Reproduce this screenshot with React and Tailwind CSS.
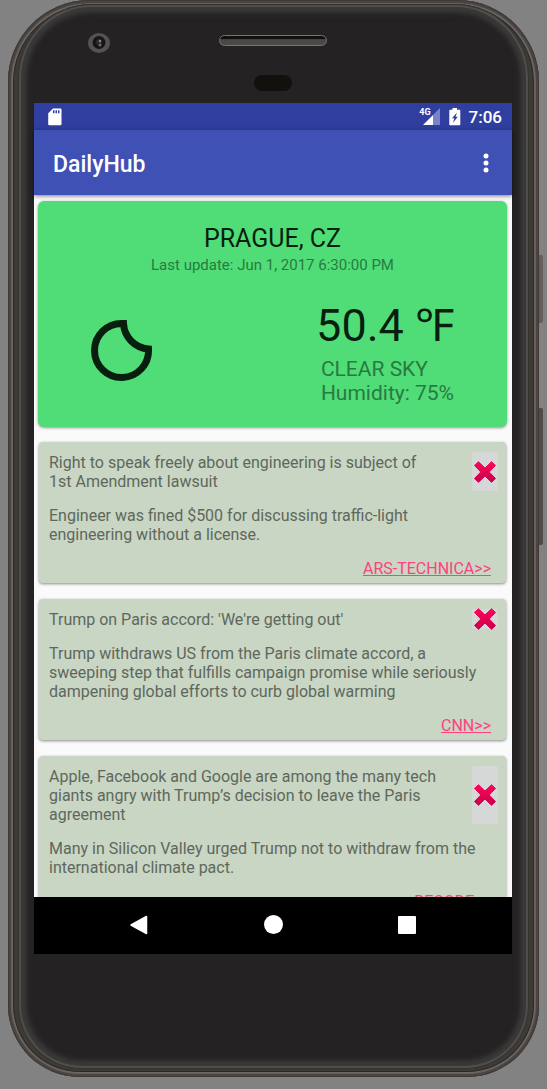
import React from "react";

const articles = [
  {
    title: "Right to speak freely about engineering is subject of 1st Amendment lawsuit",
    body: "Engineer was fined $500 for discussing traffic-light engineering without a license.",
    source: "ARS-TECHNICA>>",
  },
  {
    title: "Trump on Paris accord: 'We're getting out'",
    body: "Trump withdraws US from the Paris climate accord, a sweeping step that fulfills campaign promise while seriously dampening global efforts to curb global warming",
    source: "CNN>>",
  },
  {
    title: "Apple, Facebook and Google are among the many tech giants angry with Trump’s decision to leave the Paris agreement",
    body: "Many in Silicon Valley urged Trump not to withdraw from the international climate pact.",
    source: "RECODE>>",
  },
];

function StatusBar() {
  return (
    <div className="flex h-[27px] shrink-0 items-center bg-[#303f9f] pr-[10px] pl-[14px] text-white">
      <svg viewBox="0 0 14 18" className="h-[18px] w-[14px]" aria-hidden="true">
        <path
          fill="#fff"
          fillRule="evenodd"
          d="M5 .5h7.2c.8 0 1.3.5 1.3 1.300V16c0 .8-.5 1.300-1.300 1.300H1.500C.7 17.300.2 16.800.2 16V5.300zM5 2.300v3h1.500v-3zM7.500 2.300v3H9v-3zM10 2.300v3h1.500v-3z"
        />
      </svg>
      <div className="mr-[9px] ml-auto flex items-start">
        <span className="-mr-[8px] text-[9px] leading-[9px] font-bold">4G</span>
        <svg viewBox="0 0 17 17" className="h-[17px] w-[17px]" aria-hidden="true">
          <path fill="#7983c5" d="M10 7 17 0v17h-7z" />
          <path fill="#fff" d="M0 17 10 7v10z" />
        </svg>
      </div>
      <svg viewBox="0 0 12 18" className="mr-[8px] h-[18px] w-[12px]" aria-hidden="true">
        <path
          fill="#fff"
          fillRule="evenodd"
          d="M3.500 0h4.500v1.700h2.300c.6 0 1 .4 1 1v13.600c0 .6-.4 1-1 1H1.300c-.6 0-1-.4-1-1V2.700c0-.6.4-1 1-1h2.200zM8 4.500 3 10.200h2.300L4 14.800l4.800-6H6.500z"
        />
      </svg>
      <span className="pt-px text-[17px] leading-[26px] font-medium">7:06</span>
    </div>
  );
}

function AppBar() {
  return (
    <header className="relative z-10 flex h-[65px] shrink-0 items-center justify-between bg-[#3f51b5] pr-[14px] pl-[19px] text-white shadow-[0_1px_4px_rgba(0,0,0,0.5)]">
      <h1 className="pt-[4px] text-[23px] leading-[28px] font-medium">DailyHub</h1>
      <button type="button" aria-label="More options" className="flex h-10 w-6 items-center justify-center">
        <svg viewBox="0 0 6 20" className="h-[20px] w-[6px]" aria-hidden="true">
          <circle cx="3" cy="3" r="2.500" fill="#fff" />
          <circle cx="3" cy="10" r="2.500" fill="#fff" />
          <circle cx="3" cy="17" r="2.500" fill="#fff" />
        </svg>
      </button>
    </header>
  );
}

function WeatherCard() {
  return (
    <section className="mt-[6px] mr-[5px] ml-[4px] flex h-[226px] shrink-0 flex-col rounded-[6px] bg-[#50dd77] pt-[22px] text-[#287a41] shadow-[0_1px_3px_rgba(0,0,0,0.4)]">
      <h2 className="text-center text-[25px] leading-[31px] text-[#081f10]">PRAGUE, CZ</h2>
      <p className="text-center text-[15px] leading-[22px]">Last update: Jun 1, 2017 6:30:00 PM</p>
      <div className="flex items-start justify-between px-[53px]">
        <svg viewBox="0 0 62 62" className="mt-[43px] h-[62px] w-[62px]" aria-label="Clear night" role="img">
          <path
            d="M32.500 4.500H31A27 27 0 1 0 57.500 30 27 27 0 0 1 32.500 4.500z"
            fill="none"
            stroke="#081f10"
            strokeWidth="7"
          />
        </svg>
        <div className="flex flex-col items-end pt-[20px]">
          <p className="text-[45px] leading-[60px] text-[#081f10]">50.4 ℉</p>
          <div className="pt-px text-[21px] leading-[24px]">
            <p>CLEAR SKY</p>
            <p>Humidity: 75%</p>
          </div>
        </div>
      </div>
    </section>
  );
}

function CrossIcon() {
  return (
    <svg viewBox="0 0 24 24" className="h-[24px] w-[24px] shrink-0" aria-hidden="true">
      <defs>
        <linearGradient id="cross" x1="0" y1="0" x2="0" y2="1">
          <stop offset="0" stopColor="#ff0558" />
          <stop offset="1" stopColor="#c9004b" />
        </linearGradient>
      </defs>
      <path
        fill="url(#cross)"
        stroke="url(#cross)"
        strokeLinejoin="round"
        d="M5.500 1.700 12 8l6.500-6.300 4 3.700L16.200 12l6.300 6.500-4 3.800L12 16l-6.500 6.300-4-3.800L7.800 12 1.500 5.400z"
      />
    </svg>
  );
}

function ArticleCard({ title, body, source }) {
  return (
    <article className="shrink-0 rounded-[4px] bg-[#c8d6c3] pt-[10px] pr-[8px] pb-[5px] pl-[10px] text-[16px] leading-[19px] text-[#5f675d] shadow-[0_1px_3px_rgba(0,0,0,0.45)]">
      <div className="flex gap-[32px]">
        <h3 className="flex-1 pt-px">{title}</h3>
        <button
          type="button"
          aria-label="Dismiss article"
          className="flex w-[26px] shrink-0 items-center justify-center rounded-[2px] bg-[#d6d7d7]"
        >
          <span className="flex h-[19px] items-center">
            <CrossIcon />
          </span>
        </button>
      </div>
      <p className="mt-[15px] pr-[8px]">{body}</p>
      <p className="mt-[15px] pr-[7px] text-right">
        <a href="#source" className="text-[#ff4081] underline">
          {source}
        </a>
      </p>
    </article>
  );
}

function NavBar() {
  return (
    <nav className="flex h-[57px] shrink-0 items-center justify-center gap-[110px] bg-black pb-[2px]">
      <button type="button" aria-label="Back" className="flex size-6 items-center justify-center">
        <svg viewBox="0 0 20 20" className="size-[20px]" aria-hidden="true">
          <path d="M17.500 1.500v17L2 10z" fill="#fff" stroke="#fff" strokeWidth="1.500" strokeLinejoin="round" />
        </svg>
      </button>
      <button type="button" aria-label="Home" className="flex size-6 items-center justify-center">
        <span className="size-[19px] rounded-full bg-white" />
      </button>
      <button type="button" aria-label="Recent apps" className="flex size-6 items-center justify-center">
        <span className="size-[18px] rounded-[1px] bg-white" />
      </button>
    </nav>
  );
}

function TopBezel() {
  return (
    <div className="grid h-[94px] shrink-0 grid-cols-[1fr_auto_1fr]" aria-hidden="true">
      <svg viewBox="0 0 22 22" className="mt-[23px] ml-[54px] size-[22px]">
        <ellipse cx="11" cy="11" rx="11" ry="10" fill="#555352" />
        <circle cx="11" cy="10.500" r="6.500" fill="#171515" />
        <circle cx="11" cy="10" r="3" fill="#2d2d2b" />
        <circle cx="12" cy="9" r="1.200" fill="#8a8987" />
        <circle cx="12" cy="13" r="1.500" fill="#6b6a68" />
      </svg>
      <div className="flex flex-col items-center pt-[26px]">
        <div className="h-[11px] w-[108px] rounded-full border border-[#777573] bg-linear-to-b from-[#11100f] from-30% to-[#4b4845] to-40%" />
        <div className="mt-[29px] h-[16px] w-[38px] rounded-full bg-[#12110d]" />
      </div>
    </div>
  );
}

export default function App() {
  return (
    <div className="flex h-screen flex-col overflow-hidden bg-[#828282] px-[8px] pb-[12px] font-[Roboto,sans-serif]">
      <div className="relative flex min-h-0 flex-1 flex-col rounded-t-[82px] rounded-b-[72px] bg-[#3e3a35] px-[10px] pt-[4px] pb-[8px] shadow-[inset_0_0_0_1px_#403937,inset_0_0_0_3px_#4b4541,inset_0_0_0_4px_#65605d,inset_0_0_0_5px_#6d6865,inset_0_0_0_6px_#2b2826]">
        <div className="absolute top-[255px] -right-[4px] h-[68px] w-[4px] rounded-r-[2px] bg-[#655e5b]" />
        <div className="absolute top-[408px] -right-[4px] h-[137px] w-[4px] rounded-r-[2px] bg-[#514b48]" />
        <div className="flex min-h-0 flex-1 flex-col rounded-t-[74px] rounded-b-[64px] bg-[#242223] pt-[5px] pr-[17px] pl-[16px] shadow-[inset_0_0_0_1px_#35322f,inset_0_0_0_3px_#504e4b,inset_0_0_4px_7px_#3b3a39,inset_0_0_6px_9px_#343333]">
          <TopBezel />
          <main className="flex min-h-0 flex-1 flex-col bg-[#fafafa]">
            <StatusBar />
            <AppBar />
            <div className="flex min-h-0 flex-1 flex-col overflow-y-auto [scrollbar-width:none]">
              <WeatherCard />
              <div className="flex flex-col gap-[16px] pt-[15px] pr-[6px] pl-[5px]">
                {articles.map((a) => (
                  <ArticleCard key={a.source} {...a} />
                ))}
              </div>
            </div>
            <NavBar />
          </main>
          <div className="h-[115px] shrink-0" />
        </div>
      </div>
    </div>
  );
}
